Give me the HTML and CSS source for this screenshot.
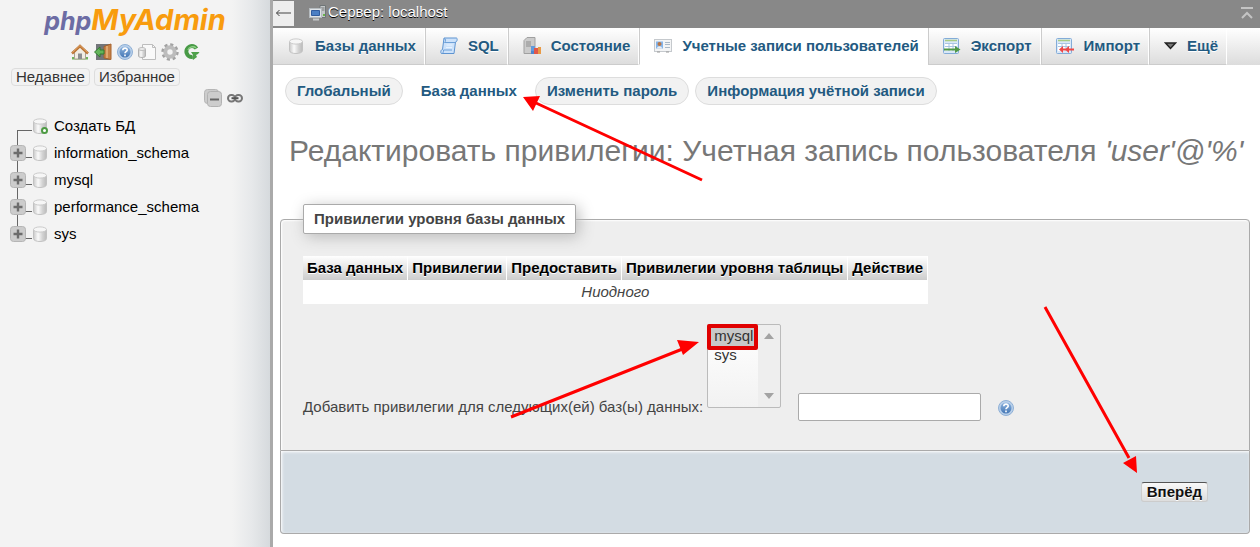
FILE: index.html
```html
<!DOCTYPE html>
<html lang="ru">
<head>
<meta charset="utf-8">
<title>phpMyAdmin</title>
<link rel="stylesheet" href="styles.css">
</head>
<body>
<svg class="defs" aria-hidden="true">
  <defs>
    <linearGradient id="g-db"><stop offset="0" stop-color="#c9c9c9"/><stop offset=".35" stop-color="#fafafa"/><stop offset=".7" stop-color="#d2d2d2"/><stop offset="1" stop-color="#bbb"/></linearGradient>
    <linearGradient id="g-help" x2="0" y2="1"><stop offset="0" stop-color="#8db3de"/><stop offset="1" stop-color="#4577b5"/></linearGradient>
    <symbol id="db" viewBox="0 0 16 16"><path d="M1.500 3.500v9c0 4 13 4 13 0v-9z" fill="url(#g-db)" stroke="#c2c2c2"/><ellipse cx="8" cy="3.500" rx="6.500" ry="2.600" fill="#f6f6f6" stroke="#cbcbcb"/></symbol>
    <symbol id="help" viewBox="0 0 16 16"><circle cx="8" cy="8" r="7.500" fill="#b9d0ea" stroke="#8fb0d6"/><circle cx="8" cy="8" r="5.500" fill="url(#g-help)"/><path d="M5.800 6.300c0-3 4.600-2.800 4.400-.2C10.100 7.700 8 7.600 8 9.300M8 10.600v1.600" fill="none" stroke="#fff" stroke-width="1.600"/></symbol>
    <symbol id="plus" viewBox="0 0 16 16"><rect x=".5" y=".5" width="15" height="15" rx="3" fill="#ccc" stroke="#b5b5b5"/><path d="M8 3.500v9M3.500 8h9" stroke="#6c6c6c" stroke-width="2.400"/></symbol>
    <symbol id="sheet" viewBox="0 0 18 16"><rect x=".5" y=".5" width="15" height="15" rx="1" fill="#d9e8f8" stroke="#83acd8"/><path d="M2 2.500h12" stroke="#a8cc82" stroke-width="1.500"/><path d="M2 5h12v8H2z" fill="#fff"/><path d="M2 5.500h12M2 8.500h12M6 5v8M10 5v8" stroke="#a9c5e2"/></symbol>
  </defs>
</svg>
<div class="page">
  <aside class="sidebar">
    <a class="logo" href="#"><span class="logo-php">php</span><span class="logo-my">MyAdmin</span></a>
    <div class="quick">
      <a href="#" aria-label="Домой"><svg class="wide" viewBox="0 0 18 16"><path d="M1 13h16v2.500H1z" fill="#70b45c"/><path d="M3.500 8 9 3l5.500 5v7h-11z" fill="#f1ede4" stroke="#aaa292"/><path d="M7 15V9.500h4V15z" fill="#8d8d91"/><path d="m1 9.500 8-7.500 8 7.500" fill="none" stroke="#bb7435" stroke-width="2.600"/><path d="m1.500 8.500 7.500-7 7.500 7" fill="none" stroke="#e1a364"/></svg></a>
      <a href="#" aria-label="Выход"><svg class="wide" viewBox="0 0 18 16"><path d="M2 0h14v16H2z" fill="#73767a"/><path d="M10 2.500 17 0v15.500L10 14z" fill="#c78348" stroke="#a7622d"/><path d="M13 2v12" stroke="#e0a871" stroke-width="2"/><path d="M.5 8 6 3v3h4v4H6v3z" fill="#63b45a" stroke="#347c31"/></svg></a>
      <a href="#" aria-label="Справка"><svg class="icon"><use href="#help"/></svg></a>
      <a href="#" aria-label="Документация"><svg class="wide" viewBox="0 0 18 16"><path d="M4.500.5h10l3 3v12h-13z" fill="#f9f9f9" stroke="#bdbdbd"/><path d="M14.500.5v3h3" fill="none" stroke="#bdbdbd"/><path d="M.5 5v7c0 2 7 2 7 0V5" fill="url(#g-db)" stroke="#b2b2b2"/><ellipse cx="4" cy="5" rx="3.500" ry="1.400" fill="#f3f3f3" stroke="#b7b7b7"/></svg></a>
      <a href="#" aria-label="Настройки"><svg class="wide" viewBox="0 0 18 18"><circle cx="9" cy="9" r="7.200" fill="none" stroke="#a2a2a2" stroke-width="3" stroke-dasharray="3 2.650"/><circle cx="9" cy="9" r="4.700" fill="none" stroke="#bcbcbc" stroke-width="4"/></svg></a>
      <a href="#" aria-label="Обновить"><svg class="icon" viewBox="0 0 16 16"><path d="M12.500 4.500A5.500 5.500 0 1 0 8.500 13" fill="none" stroke="#489a46" stroke-width="4"/><path d="M12 4A5 5 0 0 0 4 6" fill="none" stroke="#8fce86" stroke-width="1.500"/><path d="M7 8h8.500L14 10l-2 1 1 2-4 3-1-3 1-2z" fill="#4fa14b"/></svg></a>
    </div>
    <div class="recent"><button type="button">Недавнее</button><button type="button">Избранное</button></div>
    <div class="tree-tools">
      <a href="#" aria-label="Свернуть всё"><svg class="collapse" viewBox="0 0 18 18"><rect x=".5" y=".5" width="14" height="14" rx="3" fill="#ccc" stroke="#b5b5b5"/><rect x="3.500" y="2.500" width="14" height="15" rx="3" fill="#cdcdcd" stroke="#b2b2b2"/><path d="M6 10.500h9" stroke="#666" stroke-width="2"/></svg></a>
      <a href="#" aria-label="Связать с главной панелью"><svg class="icon" viewBox="0 0 16 16"><rect x="1" y="5" width="7" height="6.500" rx="3.200" fill="none" stroke="#777" stroke-width="2"/><rect x="8" y="5" width="7" height="6.500" rx="3.200" fill="none" stroke="#777" stroke-width="2"/><path d="M4.500 8.200h7" stroke="#555" stroke-width="2"/></svg></a>
    </div>
    <ul class="tree">
      <li class="first"><span class="branch"></span><svg class="icon" viewBox="0 0 16 16"><use href="#db"/><circle cx="12.500" cy="12.500" r="2.500" fill="#fff" stroke="#4d9b43" stroke-width="2"/></svg><a href="#">Создать БД</a></li>
      <li><span class="branch"><svg class="icon"><use href="#plus"/></svg></span><svg class="icon"><use href="#db"/></svg><a href="#">information_schema</a></li>
      <li><span class="branch"><svg class="icon"><use href="#plus"/></svg></span><svg class="icon"><use href="#db"/></svg><a href="#">mysql</a></li>
      <li><span class="branch"><svg class="icon"><use href="#plus"/></svg></span><svg class="icon"><use href="#db"/></svg><a href="#">performance_schema</a></li>
      <li class="last"><span class="branch"><svg class="icon"><use href="#plus"/></svg></span><svg class="icon"><use href="#db"/></svg><a href="#">sys</a></li>
    </ul>
  </aside>
  <main class="main">
    <header class="server">
      <button class="back" type="button" aria-label="Скрыть панель"><svg viewBox="0 0 16 8"><path d="M16 4H1.500M4.500 1l-3 3 3 3" fill="none" stroke="#444"/></svg></button>
      <svg class="wide" viewBox="0 0 18 16"><path d="M11 .5h5.500v12H11z" fill="#c4c8ca" stroke="#6f7577"/><path d="M12 3h3.500M12 5h3.500" stroke="#777"/><path d="M14 9h2v2h-2z" fill="#68b34b"/><rect x=".5" y="3.500" width="12" height="9" fill="#dfe3e7" stroke="#b4babe"/><path d="M2.500 5.500h8v5h-8z" fill="#4b7fc4" stroke="#315c9e"/><path d="M4 14.500h6" stroke="#c6c9cb" stroke-width="2"/></svg>
      <a href="#">Сервер: localhost</a>
      <button class="top" type="button" aria-label="Наверх"><svg viewBox="0 0 14 12"><path d="M1 1h12M2 11l5-5 5 5" fill="none" stroke="#c4c4c4" stroke-width="2"/></svg></button>
    </header>
    <nav class="tabs">
      <a href="#"><svg class="wide" viewBox="0 0 18 18"><use href="#db" x="1" y="1" width="16" height="16"/></svg>Базы данных</a>
      <a href="#"><svg class="wide" viewBox="0 0 18 18"><path d="M4 1h12.500c1 0 1 4-1 4L14 16.500H1.500c-1 0-1-4 1-4z" fill="#cde2fa" stroke="#5e94d1"/><path d="M4 1.500c2 0 2 3 .5 4h11M1.500 16.500c2 0 2-2 2-3.500H12" fill="none" stroke="#6fa1d8"/><path d="M6.500 8h6M6 10.500h6" stroke="#e8f3ff"/></svg>SQL</a>
      <a href="#"><svg class="wide" viewBox="0 0 18 18"><path d="M1 3.500 4 .5h8v14l-2 2H1z" fill="#cbcbcb" stroke="#a0a0a0"/><path d="M3 5h5M3 7h5M3 9h5" stroke="#8d8d8d"/><path d="M8 9h4v8H8z" fill="#6199dc"/><path d="M11 11h4v6h-4z" fill="#e15749"/><path d="M15 10h3v7h-3z" fill="#e99a45"/><path d="M8 14h3v3H8z" fill="#4f86cd"/></svg>Состояние</a>
      <a class="active" href="#"><svg class="wide" viewBox="0 0 18 14"><rect x=".5" y=".5" width="17" height="12" fill="#f3f4f5" stroke="#c5c9cd"/><path d="M2 2.500h7v7H2z" fill="#83b5ec"/><circle cx="5.500" cy="5" r="2" fill="#b97646"/><path d="M3 9.500c0-3 5-3 5 0z" fill="#eee"/><path d="M11 3.500h5M11 5.500h5M11 8.500h5" stroke="#a9b8c7"/><path d="M3 13h3M12 13h3" stroke="#999"/></svg>Учетные записи пользователей</a>
      <a href="#"><svg class="wide" viewBox="0 0 18 16"><use href="#sheet"/><path d="M1 10.500h11V8l5.500 3.500L12 15v-2.500H1z" fill="#4f9847"/></svg>Экспорт</a>
      <a href="#"><svg class="wide" viewBox="0 0 18 16"><use href="#sheet"/><path d="m3 11.500 4-3.500v2.500h3L13 8v2.500h5v2h-5V15l-3-2.500H7V15z" fill="#ee4747"/></svg>Импорт</a>
      <a href="#"><svg class="more" viewBox="0 0 13 8"><path d="M1.500 1h10l-5 5.500z" fill="#777" stroke="#222" stroke-width="1.500"/></svg>Ещё</a>
    </nav>
    <nav class="subtabs">
      <a href="#">Глобальный</a><a class="active" href="#">База данных</a><a href="#">Изменить пароль</a><a href="#">Информация учётной записи</a>
    </nav>
    <h2>Редактировать привилегии: Учетная запись пользователя <i>'user'@'%'</i></h2>
    <form>
      <fieldset>
        <legend>Привилегии уровня базы данных</legend>
        <table>
          <thead><tr><th>База данных</th><th>Привилегии</th><th>Предоставить</th><th>Привилегии уровня таблицы</th><th>Действие</th></tr></thead>
          <tbody><tr><td colspan="5">Ниодного</td></tr></tbody>
        </table>
        <div class="add">
          <label for="dbs">Добавить привилегии для следующих(ей) баз(ы) данных:</label>
          <div class="list">
            <select id="dbs" multiple size="4"><option selected>mysql</option><option>sys</option></select>
            <svg class="scroll" viewBox="0 0 10 68"><path d="m0 7 5-6 5 6zM0 61h10l-5 6z" fill="#a3a3a3"/></svg>
            <span class="mark"></span>
          </div>
          <input type="text" aria-label="Имя базы данных">
          <a href="#" aria-label="Справка"><svg class="icon"><use href="#help"/></svg></a>
        </div>
      </fieldset>
      <footer><button type="submit">Вперёд</button></footer>
    </form>
  </main>
</div>
<svg class="arrows" viewBox="0 0 1260 547" aria-hidden="true">
  <g stroke="#f00" stroke-width="3"><path d="M702 180 536 103M511 417l174-69M1045 307l84 151"/></g>
  <g fill="#f00"><path d="m523 97 17-1-7 15zM699 342l-16 13-6-15zM1137 473l-14-10 13-7z"/></g>
</svg>
</body>
</html>
```
FILE: styles.css
```css
* { box-sizing: border-box; }
body { margin: 0; font: 15px/20px "Liberation Sans", Arial, sans-serif; color: #444; background: #fff; }
a { color: inherit; text-decoration: none; }
button, input, select { font: inherit; margin: 0; }
svg { display: block; flex: none; }
.defs { position: absolute; width: 0; height: 0; }
.icon { width: 16px; height: 16px; }
.wide { width: 18px; height: 18px; }
.page { display: flex; min-height: 100vh; }

.sidebar { flex: none; width: 273px; border-right: 3px solid #aaa; background: linear-gradient(to right, #f3f3f3 232px, #e6e8ea 252px, #d6dadd 270px); }
.logo { display: flex; justify-content: center; align-items: baseline; height: 41px; padding-top: 2px; font: italic bold 29px/36px Inter, sans-serif; }
.logo-php { color: #6c6ca4; font-size: 25px; }
.logo-my { color: #f89c0e; }
.quick { display: flex; justify-content: center; align-items: center; gap: 5px; height: 22px; }
.recent { display: flex; gap: 4px; padding: 5px 11px 0; }
.recent button { height: 18px; padding: 0 4px; border: 1px solid #ddd; border-radius: 4px; background: #f2f2f2; color: #333; line-height: 16px; }
.tree-tools { display: flex; justify-content: flex-end; align-items: center; gap: 5px; padding: 3px 27px 0 0; }
.collapse { width: 18px; height: 18px; }
.tree { list-style: none; margin: 0; padding: 5px 0 0 10px; color: #000; }
.tree li { display: flex; align-items: center; height: 27px; }
.tree li > a { padding-left: 6px; }
.branch { display: flex; align-items: center; width: 22px; height: 27px; background: linear-gradient(#666, #666) 7px 0 / 1px 27px no-repeat, linear-gradient(#666, #666) 7px 18px / 15px 1px no-repeat; }
.tree .first .branch { background-position: 7px 18px; background-size: 1px 9px, 15px 1px; }
.tree .last .branch { background-size: 1px 18px, 15px 1px; }

.main { flex: 1; min-width: 0; }
.server { display: flex; align-items: center; height: 28px; padding: 0 6px 2px 0; background: #888; color: #fff; text-shadow: 0 1px 0 #000; }
.back { display: flex; align-items: center; width: 21px; height: 25px; margin-right: 15px; padding: 0 2px; border: 0; background: #eee; }
.back svg { width: 16px; height: 8px; }
.server a { padding-left: 1px; line-height: 22px; padding-bottom: 2px; }
.top { margin-left: auto; padding: 0; border: 0; background: none; }
.top svg { width: 14px; height: 12px; }
.tabs { display: flex; height: 37px; background: linear-gradient(#fff, #dcdcdc); font-weight: bold; color: #235a81; white-space: nowrap; }
.tabs a { display: flex; align-items: center; gap: 10px; padding: 0 8px 0 14px; border-right: 1px solid #fff; border-left: 1px solid #ccc; border-bottom: 1px solid #ccc; text-shadow: 0 1px 0 #fff; }
.tabs a:first-child { border-left: 0; }
.tabs .active { background: #fff; border-bottom-color: #fff; }
.more { width: 13px; height: 8px; }
.subtabs { display: flex; gap: 6px; padding: 12px 12px 0; font-weight: bold; color: #235a81; white-space: nowrap; }
.subtabs a { padding: 3px 11px 4px; border: 1px solid #ddd; border-radius: 20px; background: #f2f2f2; line-height: 19px; }
.subtabs .active { background: none; border-color: transparent; }
h2 { margin: 28px 0 0; padding-left: 16px; font-size: 30px; line-height: 36px; font-weight: normal; color: #777; white-space: nowrap; }

form { margin: 35px 10px 13px 7px; }
fieldset { margin: 0; padding: 22px 22px 29px; border: 1px solid #aaa; border-radius: 4px 4px 0 0; background: #eee; box-shadow: 1px 1px 2px #fff inset; }
legend { padding: 4px 10px; border: 1px solid #aaa; border-radius: 2px; background: #fff; font-weight: bold; box-shadow: 3px 3px 15px #bbb; }
table { border-collapse: collapse; white-space: nowrap; }
th { height: 24px; padding: 0 4px; border-right: 1px solid #fff; background: linear-gradient(#fff, #ccc); color: #000; text-shadow: 0 1px 0 #fff; }
td { height: 24px; padding: 0; background: #fff; text-align: center; font-style: italic; }
.add { display: flex; align-items: flex-end; padding-top: 20px; }
.add label { margin-right: 4px; line-height: 28px; }
.list { position: relative; margin-bottom: 13px; }
select { display: block; width: 74px; height: 84px; padding: 2px 0 0; border: 1px solid #bbb; border-radius: 2px; background: linear-gradient(to right, transparent 50px, #eee 50px), linear-gradient(#fff, #f2f2f2); color: #333; overflow: hidden; outline: 0; }
option { width: 50px; min-height: 19px; padding: 0 6px; line-height: 19px; }
option:checked { background: linear-gradient(#c8c8c8, #c8c8c8); color: #333; }
.scroll { position: absolute; right: 7px; top: 8px; width: 10px; height: 68px; }
.mark { position: absolute; left: 0; top: 0; width: 51px; height: 26px; border: 4px solid #e00000; border-radius: 2px; }
input { width: 183px; height: 28px; margin: 0 17px; padding: 0 6px; border: 1px solid #aaa; border-radius: 2px; background: #fff; }
.add > a { padding-bottom: 5px; }
footer { display: flex; justify-content: flex-end; padding: 31px 41px; border: 1px solid #aaa; border-top: 0; border-radius: 0 0 4px 4px; background: #d3dce3; box-shadow: 1px 1px 3px #fff inset; }
footer button { height: 20px; padding: 0 5px; border: 1px solid #ccc; border-top-color: #555; border-radius: 3px; background: linear-gradient(#f8f8f8, #ddd); color: #111; font-weight: bold; line-height: 18px; text-shadow: 0 1px 0 #fff; }
.arrows { position: absolute; left: 0; top: 0; width: 1260px; height: 547px; pointer-events: none; }
```
